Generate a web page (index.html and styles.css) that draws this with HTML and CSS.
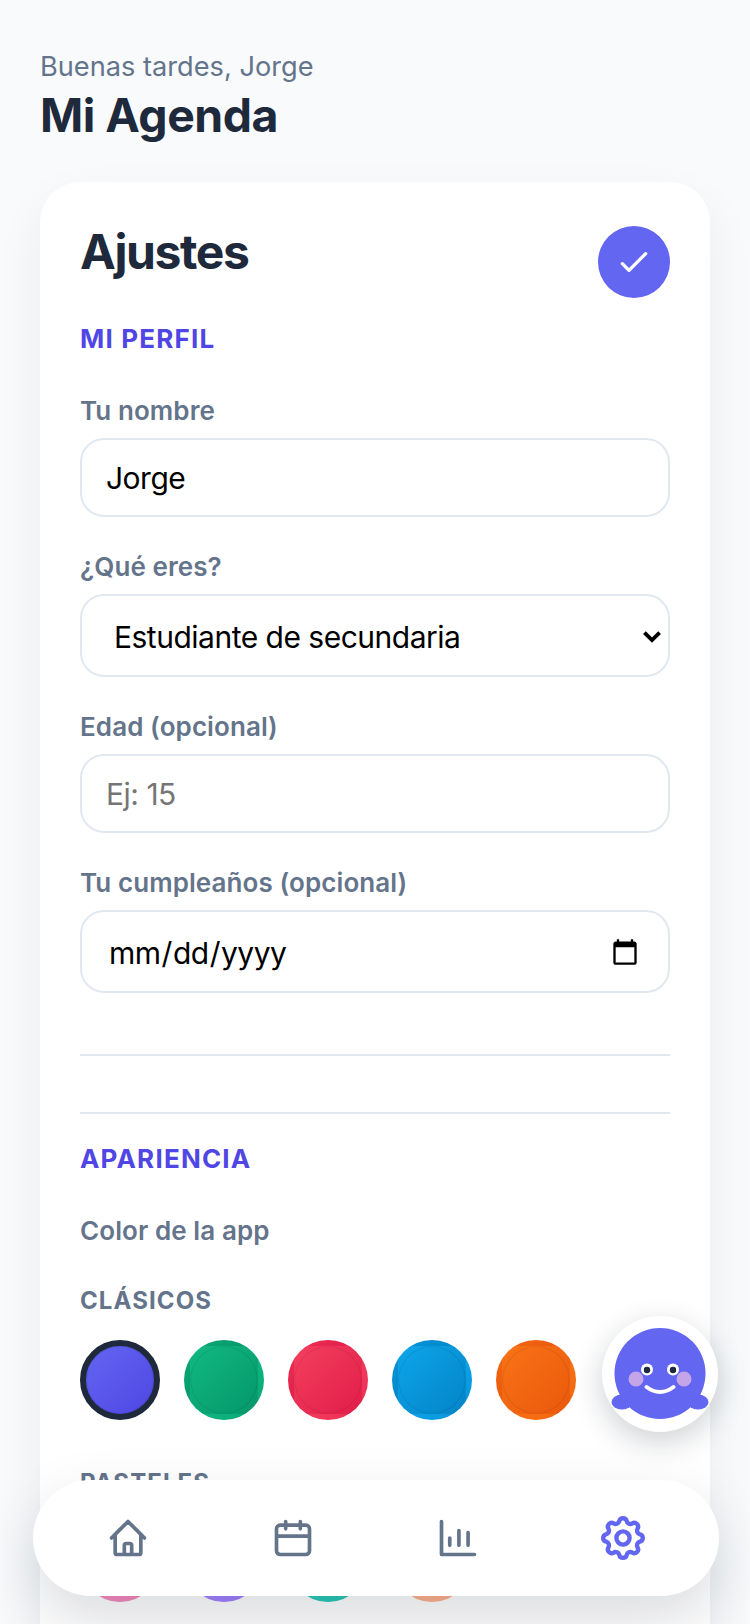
FILE: index.html
```html
<!DOCTYPE html>
<html lang="es">
<head>
<meta charset="utf-8">
<title>Mi Agenda</title>
<link rel="stylesheet" href="styles.css">
</head>
<body>
<main class="page">
  <header class="top">
    <p class="greeting">Buenas tardes, Jorge</p>
    <h1 class="app-title">Mi Agenda</h1>
  </header>
  <section class="card">
    <div class="card-head">
      <h2 class="card-title">Ajustes</h2>
      <button class="save" type="button" aria-label="Guardar">
        <svg class="save-icon" viewBox="0 0 24 24" fill="none" stroke="currentColor" stroke-width="2" stroke-linecap="round" stroke-linejoin="round"><path d="M5 13l4 4L19 7"/></svg>
      </button>
    </div>
    <h3 class="section">MI PERFIL</h3>
    <label class="field">
      <span class="label">Tu nombre</span>
      <input class="control" type="text" value="Jorge">
    </label>
    <label class="field">
      <span class="label">¿Qué eres?</span>
      <span class="select-wrap">
        <select class="control select"><option>Estudiante de secundaria</option></select>
        <svg class="chevron" viewBox="0 0 16 16" fill="none" stroke="currentColor" stroke-width="3" stroke-linecap="square"><path d="M3 5.500l5 5 5-5"/></svg>
      </span>
    </label>
    <label class="field">
      <span class="label">Edad (opcional)</span>
      <input class="control" type="text" placeholder="Ej: 15">
    </label>
    <label class="field">
      <span class="label">Tu cumpleaños (opcional)</span>
      <input class="control date" type="date">
    </label>
    <hr class="rule rule-first">
    <hr class="rule rule-second">
    <h3 class="section section-tight">APARIENCIA</h3>
    <p class="label color-label">Color de la app</p>
    <p class="group">CLÁSICOS</p>
    <div class="swatches">
      <span class="swatch selected indigo"></span>
      <span class="swatch green"></span>
      <span class="swatch rose"></span>
      <span class="swatch sky"></span>
      <span class="swatch orange"></span>
    </div>
    <p class="group group-next">PASTELES</p>
    <div class="swatches">
      <span class="swatch pink"></span>
      <span class="swatch violet"></span>
      <span class="swatch teal"></span>
      <span class="swatch peach"></span>
    </div>
  </section>
</main>

<button class="mascot" type="button" aria-label="Asistente">
  <svg class="mascot-art" viewBox="0 0 116 116">
    <ellipse cx="20" cy="86" rx="10.500" ry="7.500" fill="#6366f1"/>
    <ellipse cx="96" cy="86" rx="10.500" ry="7.500" fill="#6366f1"/>
    <circle cx="58" cy="57.500" r="45.500" fill="#6366f1"/>
    <circle cx="34" cy="63" r="7.500" fill="#c4a5e8"/>
    <circle cx="82" cy="63" r="7.500" fill="#c4a5e8"/>
    <circle cx="45" cy="53.500" r="6" fill="#fff"/>
    <circle cx="71" cy="53.500" r="6" fill="#fff"/>
    <circle cx="45" cy="54" r="3.200" fill="#1e293b"/>
    <circle cx="71" cy="54" r="3.200" fill="#1e293b"/>
    <path d="M44.500 71Q58 81 71.500 71" fill="none" stroke="#fff" stroke-width="4" stroke-linecap="round"/>
  </svg>
</button>

<nav class="nav">
  <a class="nav-item">
    <svg class="nav-icon" viewBox="0 0 24 24" fill="none" stroke="currentColor" stroke-width="2" stroke-linecap="round" stroke-linejoin="round"><path d="M3 12l2-2m0 0l7-7 7 7M5 10v10a1 1 0 001 1h3m10-11l2 2m-2-2v10a1 1 0 01-1 1h-3m-6 0a1 1 0 001-1v-4a1 1 0 011-1h2a1 1 0 011 1v4a1 1 0 001 1m-6 0h6"/></svg>
  </a>
  <a class="nav-item">
    <svg class="nav-icon" viewBox="0 0 24 24" fill="none" stroke="currentColor" stroke-width="2" stroke-linecap="round" stroke-linejoin="round"><path d="M8 7V3m8 4V3M3 11h18M5 21h14a2 2 0 002-2V7a2 2 0 00-2-2H5a2 2 0 00-2 2v12a2 2 0 002 2z"/></svg>
  </a>
  <a class="nav-item">
    <svg class="nav-icon" viewBox="0 0 24 24" fill="none" stroke="currentColor" stroke-width="2" stroke-linecap="round" stroke-linejoin="round"><path d="M3 3v18h18M7.500 16v-4M12.500 16V8M17.500 16V9"/></svg>
  </a>
  <a class="nav-item active">
    <svg class="nav-icon" viewBox="0 0 24 24" fill="none" stroke="currentColor" stroke-width="2" stroke-linecap="round" stroke-linejoin="round"><path d="M10.325 4.317c.426-1.756 2.924-1.756 3.35 0a1.724 1.724 0 002.573 1.066c1.543-.94 3.31.826 2.37 2.37a1.724 1.724 0 001.065 2.572c1.756.426 1.756 2.924 0 3.35a1.724 1.724 0 00-1.066 2.573c.94 1.543-.826 3.31-2.37 2.37a1.724 1.724 0 00-2.572 1.065c-.426 1.756-2.924 1.756-3.35 0a1.724 1.724 0 00-2.573-1.066c-1.543.94-3.31-.826-2.37-2.37a1.724 1.724 0 00-1.065-2.572c-1.756-.426-1.756-2.924 0-3.35a1.724 1.724 0 001.066-2.573c-.94-1.543.826-3.31 2.37-2.37.996.608 2.296.07 2.572-1.065z"/><path d="M15 12a3 3 0 11-6 0 3 3 0 016 0z"/></svg>
  </a>
</nav>
</body>
</html>
```
FILE: styles.css
```css
* { box-sizing: border-box; }
html, body { margin: 0; height: 1624px; overflow: hidden; }
body { background: #f8fafc; font-family: Inter, "Liberation Sans", sans-serif; color: #1e293b; }
p, h1, h2, h3 { margin: 0; }

.page { padding: 49px 40px 0; }
.greeting { font-size: 27.200px; line-height: 36px; color: #64748b; }
.app-title { margin-top: 5px; font-size: 46.400px; line-height: 50px; font-weight: 700; letter-spacing: -0.5px; }

.card { margin-top: 42px; padding: 44px 40px 60px; background: #fff; border-radius: 40px; box-shadow: 0 20px 50px rgba(15, 23, 42, 0.06); height: 1600px; }
.card-head { display: flex; justify-content: space-between; align-items: flex-start; }
.card-title { font-size: 48px; line-height: 52px; font-weight: 700; letter-spacing: -1.400px; }
.save { width: 72px; height: 72px; padding: 0; border: 0; border-radius: 50%; background: #6366f1; color: #fff; display: flex; align-items: center; justify-content: center; }
.save-icon { width: 40px; height: 40px; }

.section { margin-top: 26px; font-size: 26px; line-height: 30px; font-weight: 700; letter-spacing: 1.200px; color: #4f46e5; }
.field { display: block; margin-top: 35px; }
.section + .field { margin-top: 42px; }
.label { display: block; font-size: 26px; line-height: 30px; font-weight: 600; letter-spacing: 0.08px; color: #64748b; }
.control { display: block; width: 100%; height: 79px; margin-top: 12px; padding: 0 24px; border: 2px solid #e2e8f0; border-radius: 24px; background: #fff; font-family: Inter, "Liberation Sans", sans-serif; font-size: 30px; letter-spacing: -0.5px; color: #000; outline: none; }
.select-wrap { display: block; position: relative; }
.select { height: 83px; padding: 2px 32px 0; appearance: none; }
.chevron { position: absolute; right: 8px; top: 33px; width: 20px; height: 20px; color: #000; }
.date { height: 83px; padding: 2px 26px 0; }

.rule { height: 2px; margin: 0; border: 0; background: #e2e8f0; }
.rule-first { margin-top: 61px; }
.rule-second { margin-top: 56px; }
.section-tight { margin-top: 30px; }
.color-label { margin-top: 42px; }
.group { margin-top: 40px; font-size: 24px; line-height: 30px; font-weight: 700; letter-spacing: 1.100px; color: #64748b; }
.group-next { margin-top: 48px; }
.swatches { display: flex; gap: 24px; margin-top: 24px; }
.group-next + .swatches { margin-top: 24px; }

.swatch { flex: none; width: 80px; height: 80px; border: 6px solid transparent; border-radius: 50%; box-shadow: inset 0 0 0 1.500px rgba(0, 0, 0, 0.05); }
.selected { border-color: #1e293b; }
.indigo { background-image: linear-gradient(135deg, #6366f1, #4f46e5); }
.green { background-image: linear-gradient(135deg, #10b981, #059669); }
.rose { background-image: linear-gradient(135deg, #f43f5e, #e11d48); }
.sky { background-image: linear-gradient(135deg, #0ea5e9, #0284c7); }
.orange { background-image: linear-gradient(135deg, #f97316, #ea580c); }
.pink { background-image: linear-gradient(135deg, #f78fc0, #f47ab8); }
.violet { background-image: linear-gradient(135deg, #a684ff, #9878ff); }
.teal { background-image: linear-gradient(135deg, #2cccb8, #1cc0ae); }
.peach { background-image: linear-gradient(135deg, #ffb591, #ffa880); }

.mascot { position: fixed; left: 602px; top: 1316px; width: 116px; height: 116px; padding: 0; border: 0; border-radius: 50%; background: #fff; box-shadow: 0 10px 30px rgba(15, 23, 42, 0.2); }
.mascot-art { display: block; width: 116px; height: 116px; }

.nav { position: fixed; left: 33px; top: 1480px; width: 686px; height: 116px; padding: 0 14px 0 12px; display: flex; align-items: center; border-radius: 58px; background: #fff; box-shadow: 0 25px 60px rgba(15, 23, 42, 0.15); }
.nav-item { flex: 1; display: flex; justify-content: center; color: #64748b; }
.nav-icon { display: block; width: 44px; height: 44px; }
.active { color: #6366f1; }
.active .nav-icon { transform: scale(1.2); }
```
